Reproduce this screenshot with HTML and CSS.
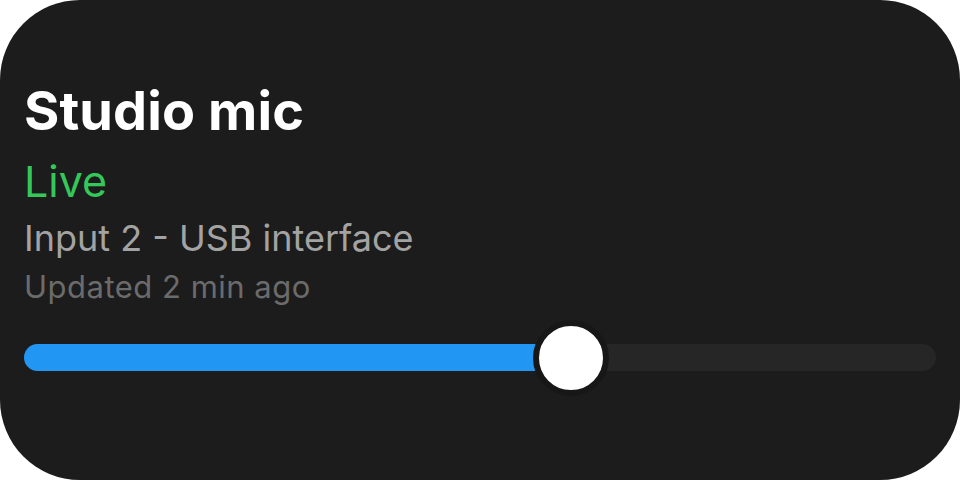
FILE: index.html
```html
<!DOCTYPE html>
<html lang="en">
<head>
<meta charset="utf-8">
<title>Studio mic</title>
<link rel="stylesheet" href="styles.css">
</head>
<body>
<main class="card">
  <div class="info">
    <h1 class="title">Studio mic</h1>
    <div class="status">Live</div>
    <div class="source">Input 2 - USB interface</div>
    <div class="updated">Updated 2 min ago</div>
  </div>
  <div class="slider">
    <div class="track">
      <div class="fill" style="width: 60%"></div>
      <div class="thumb" style="left: 60%"></div>
    </div>
  </div>
</main>
</body>
</html>
```
FILE: styles.css
```css
html, body {
  margin: 0;
  padding: 0;
  background: #ffffff;
}
body {
  width: 960px;
  height: 480px;
  font-family: Inter, "Noto Sans", "Liberation Sans", sans-serif;
}
.card {
  box-sizing: border-box;
  width: 960px;
  height: 480px;
  background: #1c1c1c;
  border-radius: 80px;
  padding: 75px 24px 0 24px;
  display: flex;
  flex-direction: column;
}
.info {
  display: flex;
  flex-direction: column;
}
.title {
  margin: 0;
  color: #ffffff;
  font-size: 54px;
  font-weight: 700;
  line-height: 72px;
  letter-spacing: 0.1px;
}
.status {
  margin-top: 6px;
  color: #34c759;
  font-size: 43px;
  line-height: 56px;
  font-weight: 400;
}
.source {
  margin-top: 3px;
  color: #a3a3a3;
  font-size: 36px;
  line-height: 52px;
}
.updated {
  margin-top: 1px;
  color: #6b6b6b;
  font-size: 31px;
  line-height: 44px;
  letter-spacing: 0.5px;
}
.slider {
  margin-top: 35px;
}
.track {
  position: relative;
  height: 27px;
  border-radius: 14px;
  background: #262626;
}
.fill {
  height: 100%;
  border-radius: 14px 0 0 14px;
  background: #2196f3;
}
.thumb {
  position: absolute;
  top: 50%;
  width: 64px;
  height: 64px;
  border-radius: 50%;
  background: #ffffff;
  border: 6px solid #171717;
  transform: translate(-50%, -50%);
}
```
